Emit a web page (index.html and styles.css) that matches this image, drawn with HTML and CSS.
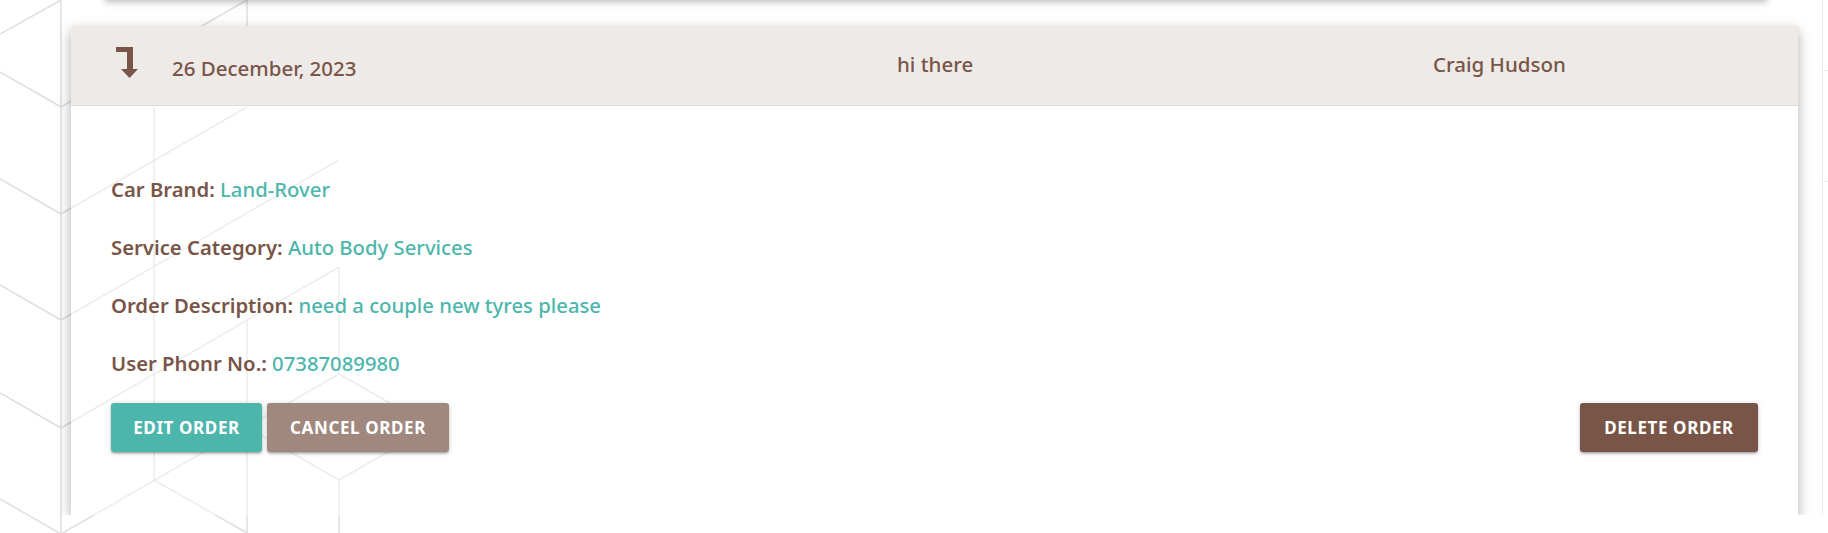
FILE: index.html
```html
<!DOCTYPE html>
<html lang="en">
<head>
<meta charset="utf-8">
<title>Orders</title>
<link rel="stylesheet" href="styles.css">
</head>
<body>
<svg class="pattern" width="420" height="533" viewBox="0 0 420 533" aria-hidden="true">
  <g fill="none" stroke="#dedede" stroke-width="1.5">
    <line x1="61" y1="0" x2="61" y2="533"/>
    <line x1="0" y1="34" x2="61" y2="0"/>
    <line x1="0" y1="72" x2="61" y2="107"/>
    <line x1="0" y1="179" x2="61" y2="214"/>
    <line x1="0" y1="285" x2="61" y2="320"/>
    <line x1="0" y1="393" x2="61" y2="428"/>
    <line x1="0" y1="499" x2="61" y2="534"/>
    <line x1="61" y1="107" x2="247" y2="0"/>
    <line x1="61" y1="214" x2="247" y2="107"/>
    <line x1="61" y1="320" x2="339" y2="160"/>
    <line x1="61" y1="428" x2="339" y2="267"/>
    <line x1="61" y1="534" x2="339" y2="374"/>
    <line x1="154" y1="107" x2="154" y2="480"/>
    <line x1="247" y1="0" x2="247" y2="40"/>
    <line x1="247" y1="320" x2="247" y2="533"/>
    <line x1="339" y1="267" x2="339" y2="374"/>
    <line x1="339" y1="480" x2="339" y2="533"/>
    <line x1="154" y1="480" x2="247" y2="533"/>
    <line x1="247" y1="427" x2="339" y2="480"/>
    <line x1="339" y1="480" x2="400" y2="445"/>
    <line x1="339" y1="374" x2="400" y2="409"/>
  </g>
</svg>
<div class="page">
  <main class="main">
    <div class="prev-card"></div>
    <section class="card">
      <header class="card-head">
        <span class="head-icon">
          <svg width="23" height="32" viewBox="0 0 23 32" aria-hidden="true">
            <path d="M0 0 H17 V22 H22 L13.5 31 L5 22 H11 V5 H0 Z" fill="#795548"/>
          </svg>
        </span>
        <span class="head-date">26 December, 2023</span>
        <span class="head-title">hi there</span>
        <span class="head-name">Craig Hudson</span>
      </header>
      <div class="card-body">
        <ul class="details">
          <li><span class="label">Car Brand:</span> <span class="value">Land-Rover</span></li>
          <li><span class="label">Service Category:</span> <span class="value">Auto Body Services</span></li>
          <li><span class="label">Order Description:</span> <span class="value">need a couple new tyres please</span></li>
          <li><span class="label">User Phonr No.:</span> <span class="value">07387089980</span></li>
        </ul>
        <div class="actions">
          <div class="actions-left">
            <button class="btn btn-teal">Edit Order</button>
            <button class="btn btn-light">Cancel Order</button>
          </div>
          <button class="btn btn-dark">Delete Order</button>
        </div>
      </div>
    </section>
  </main>
  <aside class="side">
    <div class="side-top"></div>
    <div class="side-mid"></div>
  </aside>
</div>
</body>
</html>
```
FILE: styles.css
```css
html, body {
  margin: 0;
  padding: 0;
  background: #ffffff;
}

body {
  width: 1828px;
  height: 533px;
  overflow: hidden;
  position: relative;
  font-family: "Noto Sans", "Open Sans", sans-serif;
  color: #795548;
}

.pattern {
  position: absolute;
  left: 0;
  top: 0;
  z-index: 0;
}

.page {
  position: relative;
  z-index: 1;
  display: flex;
  width: 1828px;
  overflow: hidden;
}

.main {
  flex: 0 0 1727px;
  padding-left: 71px;
  padding-right: 24px;
}

.prev-card {
  height: 40px;
  margin: -40px 31px 26px 34px;
  background: #fff;
  box-shadow: 0 2px 5px 0 rgba(0,0,0,0.16), 0 2px 10px 0 rgba(0,0,0,0.12);
}

.card {
  width: 1727px;
  box-shadow: 0 5px 11px 0 rgba(0,0,0,0.18), 0 4px 15px 0 rgba(0,0,0,0.15);
}

.card-head {
  display: grid;
  grid-template-columns: 56px 725px 536px 1fr;
  align-items: center;
  height: 79px;
  padding-left: 45px;
  background: #eeeae7;
  border-bottom: 1px solid #dcdcdc;
}

.head-icon {
  display: flex;
  align-self: start;
  margin-top: 21px;
}

.head-date {
  font-size: 20.5px;
  font-weight: 500;
  padding-top: 4px;
}

.head-title,
.head-name {
  font-size: 20.5px;
  font-weight: 500;
  padding-bottom: 3px;
}

.card-body {
  background: rgba(255,255,255,0.45);
  padding: 68px 40px 63px 40px;
}

.details {
  list-style: none;
  margin: 0;
  padding: 0;
  display: flex;
  flex-direction: column;
  gap: 28px;
}

.details li {
  font-size: 20.3px;
  line-height: 30px;
}

.label {
  font-weight: 600;
  color: #795548;
}

.value {
  font-weight: 500;
  color: #4db6ac;
}

.actions {
  display: flex;
  justify-content: space-between;
  align-items: center;
  margin-top: 25px;
}

.actions-left {
  display: flex;
  gap: 5px;
}

.btn {
  height: 49px;
  border: none;
  border-radius: 3px;
  padding: 0 20px;
  font-family: "Noto Sans", "Open Sans", sans-serif;
  font-size: 17px;
  font-weight: 700;
  letter-spacing: 0.6px;
  text-transform: uppercase;
  color: #ffffff;
  box-shadow: 0 2px 2px 0 rgba(0,0,0,0.14), 0 3px 1px -2px rgba(0,0,0,0.12), 0 1px 5px 0 rgba(0,0,0,0.2);
  cursor: pointer;
}

.btn-teal { background: #4db6ac; width: 151px; }
.btn-light { background: #a1887f; width: 182px; }
.btn-dark { background: #795548; width: 178px; }

.side {
  flex: 0 0 200px;
  border-left: 1px solid #ececec;
}

.side-top {
  height: 70px;
  border-bottom: 1px solid #ececec;
}

.side-mid {
  height: 110px;
  border-bottom: 1px solid #ececec;
}
```
